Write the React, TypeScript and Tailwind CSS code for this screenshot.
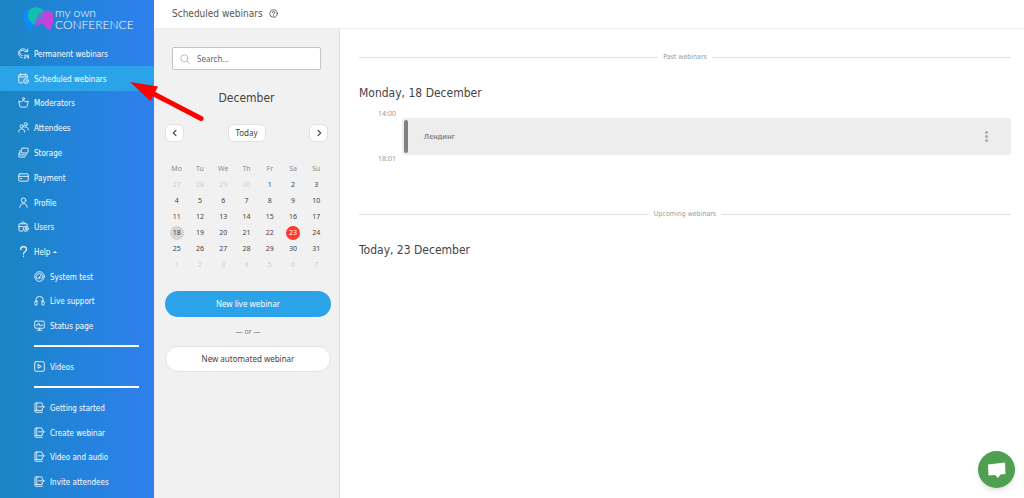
import { useState } from "react";
import type { ReactNode } from "react";
import { clsx } from "clsx";

interface IconProps {
  children: ReactNode;
  className?: string;
}

const Icon = ({ children, className = "w-[11px] h-[11px]" }: IconProps) => (
  <svg
    className={clsx("shrink-0", className)}
    viewBox="0 0 24 24"
    fill="none"
    stroke="currentColor"
    strokeWidth={1.8}
    strokeLinecap="round"
    strokeLinejoin="round"
    aria-hidden="true"
  >
    {children}
  </svg>
);

const PermanentIcon = () => (
  <Icon>
    <path d="M9.500 21.500A10 10 0 1 1 20 7" />
    <path d="M21 2.500V7.500h-5" />
    <path d="M14.500 7A6 6 0 1 0 9 16.500" />
    <path d="M13.500 16c1-1.500 3.500-1 3 1l-3 5h3.500M19.500 15.500v4h3.500M22.500 15.500v7" />
  </Icon>
);

const ScheduledIcon = () => (
  <Icon>
    <path d="M10 21.500H4a2.500 2.500 0 0 1-2.500-2.500V6A2.500 2.500 0 0 1 4 3.500h14A2.500 2.500 0 0 1 20.500 6v4M1.500 8.500h19M6 1.500v4M16 1.500v4" />
    <circle cx="17.500" cy="17.500" r="5.200" />
    <path d="M15.500 17.500l1.500 1.500 2.500-3" />
  </Icon>
);

const ModeratorsIcon = () => (
  <Icon>
    <circle cx="12" cy="3.500" r="2.300" />
    <path d="M12 6.500l4.500 4.500L22.500 9 20 20c-.3 1.300-1 2-2.300 2H6.300C5 22 4.300 21.300 4 20L1.500 9l6 2L12 6.500z" />
  </Icon>
);

const AttendeesIcon = () => (
  <Icon>
    <circle cx="8" cy="9.500" r="3.500" />
    <path d="M1.500 22c0-4.500 2.500-7 6.500-7s6.500 2.500 6.500 7" />
    <circle cx="17" cy="5" r="3.500" />
    <path d="M14.500 11c4.500-1.500 8 1.500 8 6.500" />
  </Icon>
);

const StorageIcon = () => (
  <Icon>
    <path d="M9 2.500h11.500a2 2 0 0 1 2 2.300l-1 6.500a2 2 0 0 1-2 1.700H9a2 2 0 0 1-2-2.300L7.500 4.500A2 2 0 0 1 9 2.500" />
    <path d="M4.500 7.500L3.500 15a2 2 0 0 0 2 2.300h11.500a2 2 0 0 0 2-1.800" />
    <path d="M2.500 13l-1 6.500a2 2 0 0 0 2 2.500H14a2 2 0 0 0 2-2" />
  </Icon>
);

const PaymentIcon = () => (
  <Icon>
    <rect x="1.500" y="4" width="21" height="16" rx="2.500" />
    <path d="M1.500 9.500h21M5 14.500h3" />
  </Icon>
);

const ProfileIcon = () => (
  <Icon>
    <circle cx="12" cy="7" r="5" />
    <path d="M4 22.500c0-5 3-8 8-8s8 3 8 8" />
  </Icon>
);

const UsersIcon = () => (
  <Icon>
    <path d="M10 22H4.500a2.500 2.500 0 0 1-2.500-2.500v-11A2.500 2.500 0 0 1 4.500 6h13A2.500 2.500 0 0 1 20 8.500V11M7 6c0-5.500 8-5.500 8 0M2 12h9" />
    <circle cx="17" cy="17" r="5.500" />
    <path d="M14.500 19.500c.5-2.500 4.500-2.500 5 0" />
    <circle cx="17" cy="15.500" r="1.200" />
  </Icon>
);

const HelpIcon = () => (
  <Icon>
    <path d="M6 7.500C6 4 8.500 1.500 12 1.500S18.500 4 18.500 7.500c0 4.500-6.500 5-6.500 10M12 22v.5" strokeWidth={2.500} />
  </Icon>
);

const SystemTestIcon = () => (
  <Icon>
    <circle cx="12" cy="12" r="10.500" />
    <path d="M7 17.500a7 7 0 1 1 10 0M12 14l3.500-5.500" />
    <circle cx="11.500" cy="15" r="1.500" />
  </Icon>
);

const SupportIcon = () => (
  <Icon>
    <path d="M4 14V11a8 8 0 0 1 16 0v3" />
    <path d="M6.500 13.500H4a3 3 0 0 0-2.500 3V19a3 3 0 0 0 3 3h2v-8.500zM17.500 13.500H20a3 3 0 0 1 2.500 3V19a3 3 0 0 1-3 3h-2v-8.500z" />
  </Icon>
);

const StatusIcon = () => (
  <Icon>
    <rect x="1.500" y="2.500" width="21" height="15.500" rx="2.500" />
    <path d="M12 18v4M7 22.300h10M5 11h3.500l2-4 3 6.500 2-2.500H19" />
  </Icon>
);

const VideoIcon = () => (
  <Icon>
    <rect x="1.500" y="1.500" width="21" height="21" rx="2.500" />
    <path d="M9 8v8l7-4-7-4z" />
  </Icon>
);

const GuideIcon = () => (
  <Icon>
    <path d="M18 6.500V4a2 2 0 0 0-2-2H4a2 2 0 0 0-2 2v14.500M18 14v4.500H4A2 2 0 0 0 4 22.500h14M6 2v16" />
    <path d="M10 10.500h12M19 7.500l3.300 3-3.300 3" />
  </Icon>
);

const mainLinks = [
  { label: "Permanent webinars", icon: <PermanentIcon /> },
  { label: "Scheduled webinars", icon: <ScheduledIcon />, active: true },
  { label: "Moderators", icon: <ModeratorsIcon /> },
  { label: "Attendees", icon: <AttendeesIcon /> },
  { label: "Storage", icon: <StorageIcon /> },
  { label: "Payment", icon: <PaymentIcon /> },
  { label: "Profile", icon: <ProfileIcon /> },
  { label: "Users", icon: <UsersIcon /> },
];

const helpLinks = [
  { label: "System test", icon: <SystemTestIcon /> },
  { label: "Live support", icon: <SupportIcon /> },
  { label: "Status page", icon: <StatusIcon /> },
];

const guideLinks = ["Getting started", "Create webinar", "Video and audio", "Invite attendees"];

const weekdays = ["Mo", "Tu", "We", "Th", "Fr", "Sa", "Su"];

// Six weeks, starting from Monday 27 November
const weeks = Array.from({ length: 6 }, (_, week) =>
  Array.from({ length: 7 }, (_, day) => {
    const n = week * 7 + day - 3;
    if (n < 1) return { day: n + 30, outside: true };
    if (n > 31) return { day: n - 31, outside: true };
    return { day: n, outside: false };
  })
);

const Logo = () => (
  <a href="#" className="flex h-[41px] items-start gap-[2px] pl-6 pt-[7px] text-white">
    <svg className="h-6 w-[29px] shrink-0" viewBox="0 0 29 24" aria-hidden="true">
      <defs>
        <linearGradient id="magenta" x1="0" y1="0" x2="1" y2="1">
          <stop offset="0" stopColor="#9c63e0" />
          <stop offset="0.5" stopColor="#c43fdc" />
          <stop offset="1" stopColor="#c944dd" />
        </linearGradient>
      </defs>
      <path d="M0 8C0 3 4 2 9 5l3 10c-2 2-3 8-6 8C3 22-1 13 0 8z" fill="#0b8bfa" />
      <path d="M4 6C5 1 11-1 16 1c3 1 4 3 4 5-5 2-6 11-10 11-3 0-7-6-6-11z" fill="#12bdb4" />
      <path
        d="M11 18c1-6 4-14 11-14 5-1 7 1 7 5 0 6-1 14-4 14-3 0-3-6-7-6-3 0-6 3-7 1z"
        fill="url(#magenta)"
      />
      <path d="M11 17c0-4 2-8 5-11 2 0 4 0 4 2-1 4-5 7-9 9z" fill="#6b74d4" />
    </svg>
    <span className="flex flex-col font-['Lato',sans-serif] text-[12px] leading-[12px] font-light">
      <span>my own</span>
      <span>CONFERENCE</span>
    </span>
  </a>
);

interface SideLinkProps {
  label: string;
  icon: ReactNode;
  active?: boolean;
  nested?: boolean;
}

const SideLink = ({ label, icon, active, nested }: SideLinkProps) => (
  <li className="grid">
    <a
      href="#"
      aria-current={active ? "page" : undefined}
      className={clsx(
        "flex items-center gap-[5px]",
        nested ? "pl-[34px]" : "pl-[18px]",
        active && "bg-[#2ba3e8]"
      )}
    >
      {icon}
      <span className="pt-[3px]">{label}</span>
    </a>
  </li>
);

const Divider = () => <hr className="my-[7px] ml-[34px] mr-[15px] h-[2px] border-0 bg-white" />;

const Sidebar = () => {
  const [helpOpen, setHelpOpen] = useState(true);

  return (
    <nav className="w-[154px] shrink-0 bg-linear-to-r from-[#1985c1] via-[#2383dc] to-[#2f80ee] font-['DejaVu_Sans_Condensed','DejaVu_Sans',sans-serif] text-[8px] leading-[12px] text-white">
      <Logo />
      <ul className="grid h-[223px] auto-rows-fr">
        {mainLinks.map((link) => (
          <SideLink key={link.label} {...link} />
        ))}
        <li className="grid">
          <button
            type="button"
            aria-expanded={helpOpen}
            className="flex items-center gap-[5px] pl-[18px]"
            onClick={() => setHelpOpen(!helpOpen)}
          >
            <HelpIcon />
            <span className="pt-[3px]">Help</span>
            <svg
              className={clsx("-ml-[2px] h-[2px] w-1", !helpOpen && "rotate-180")}
              viewBox="0 0 4 2"
              fill="currentColor"
              aria-hidden="true"
            >
              <path d="M0 2l2-2 2 2z" />
            </svg>
          </button>
        </li>
      </ul>
      {helpOpen && (
        <>
          <ul className="grid h-[74px] auto-rows-fr">
            {helpLinks.map((link) => (
              <SideLink key={link.label} {...link} nested />
            ))}
          </ul>
          <Divider />
          <ul className="grid h-[25px]">
            <SideLink label="Videos" icon={<VideoIcon />} nested />
          </ul>
          <Divider />
          <ul className="grid h-[99px] auto-rows-fr">
            {guideLinks.map((label) => (
              <SideLink key={label} label={label} icon={<GuideIcon />} nested />
            ))}
          </ul>
        </>
      )}
    </nav>
  );
};

const roundButton =
  "flex h-[18px] items-center justify-center rounded-[6px] border border-[#e2e2e2] bg-white text-[#444]";

const Calendar = () => (
  <div className="w-[163px]">
    <h2 className="mt-[19px] text-center font-['DejaVu_Sans_Condensed','DejaVu_Sans',sans-serif] text-[12px] leading-[18px] text-[#444]">
      December
    </h2>
    <div className="mt-[17px] flex justify-between">
      <button type="button" aria-label="Previous month" className={clsx(roundButton, "w-[19px]")}>
        <Icon className="h-2 w-2">
          <path d="M15 4l-8 8 8 8" strokeWidth={3.500} />
        </Icon>
      </button>
      <button type="button" className={clsx(roundButton, "w-[38px] text-[8px]")}>
        Today
      </button>
      <button type="button" aria-label="Next month" className={clsx(roundButton, "w-[19px]")}>
        <Icon className="h-2 w-2">
          <path d="M9 4l8 8-8 8" strokeWidth={3.500} />
        </Icon>
      </button>
    </div>
    <table className="mt-[19px] w-full table-fixed text-center text-[7px] text-[#444]">
      <thead>
        <tr className="h-4 text-[#8c8c8c]">
          {weekdays.map((day) => (
            <th key={day} scope="col" className="p-0 font-normal leading-4">
              {day}
            </th>
          ))}
        </tr>
      </thead>
      <tbody>
        {weeks.map((week, i) => (
          <tr key={i} className="h-4">
            {week.map(({ day, outside }) => (
              <td key={day} className="p-0">
                <button
                  type="button"
                  className={clsx(
                    "mx-auto flex h-[14px] w-[14px] items-center justify-center rounded-full",
                    outside && "text-[#d0d0d0]",
                    !outside && day === 18 && "bg-[#d5d5d5]",
                    !outside && day === 23 && "bg-[#fb3b30] text-white"
                  )}
                >
                  {day}
                </button>
              </td>
            ))}
          </tr>
        ))}
      </tbody>
    </table>
  </div>
);

const CalendarPanel = () => (
  <aside className="flex w-[186px] shrink-0 flex-col border-r border-[#dcdcdc] bg-[#f1f1f1] pl-[11px] pr-2 pt-[18px]">
    <label className="ml-[7px] flex h-[23px] w-[149px] items-center gap-[7px] rounded-[2px] border border-[#c4c4c4] bg-white pl-[7px]">
      <Icon className="h-[10px] w-[10px] text-[#aaa]">
        <circle cx="10.500" cy="10.500" r="8.500" />
        <path d="M17 17l5.500 5.500" />
      </Icon>
      <input
        type="search"
        aria-label="Search webinars"
        placeholder="Search..."
        className="w-full min-w-0 text-[8px] text-[#444] outline-none placeholder:text-[#666]"
      />
    </label>
    <Calendar />
    <button type="button" className="mt-[18px] h-[26px] rounded-full bg-[#2ba3e8] text-[8px] text-white">
      New live webinar
    </button>
    <p className="my-2 text-center text-[7px] leading-[13px] text-[#777]">— or —</p>
    <button
      type="button"
      className="h-[26px] rounded-full border border-[#e2e2e2] bg-white text-[8px] text-[#444]"
    >
      New automated webinar
    </button>
  </aside>
);

const SectionLine = ({ title }: { title: string }) => (
  <div className="flex h-3 items-center gap-[5px] text-[#999]">
    <span className="h-px flex-1 bg-[#e2e2e2]" />
    <span className="font-['DejaVu_Sans_Condensed','DejaVu_Sans',sans-serif] text-[7px] leading-[12px]">
      {title}
    </span>
    <span className="h-px flex-1 bg-[#e2e2e2]" />
  </div>
);

const DayTitle = ({ children }: { children: ReactNode }) => (
  <h2 className="mt-[21px] font-['DejaVu_Sans_Condensed','DejaVu_Sans',sans-serif] text-[12px] leading-[18px] text-[#444]">
    {children}
  </h2>
);

const WebinarList = () => (
  <section className="min-w-0 flex-1 pl-[19px] pr-[13px] pt-[22px]">
    <SectionLine title="Past webinars" />
    <DayTitle>Monday, 18 December</DayTitle>
    <article className="mt-2 flex">
      <div className="flex w-[43px] flex-col justify-between pl-[19px] text-[7px] leading-[8px] text-[#999]">
        <time>14:00</time>
        <time>18:01</time>
      </div>
      <div className="my-2 flex h-[37px] flex-1 items-center rounded-[3px] bg-[#ededed] p-[2px] pr-5">
        <span className="h-full w-1 rounded-[2px] bg-[#808080]" />
        <h3 className="flex-1 pl-[16px] text-[7px] leading-[12px] font-bold text-[#8c8c8c]">Лендинг</h3>
        <button type="button" aria-label="Webinar actions" className="flex flex-col gap-px p-[3px]">
          <span className="h-[3px] w-[3px] rounded-full bg-[#aaa]" />
          <span className="h-[3px] w-[3px] rounded-full bg-[#aaa]" />
          <span className="h-[3px] w-[3px] rounded-full bg-[#aaa]" />
        </button>
      </div>
    </article>
    <div className="mt-[45px]">
      <SectionLine title="Upcoming webinars" />
    </div>
    <DayTitle>Today, 23 December</DayTitle>
  </section>
);

export default function App() {
  return (
    <div className="relative flex min-h-screen bg-white font-['Noto_Sans',sans-serif]">
      <Sidebar />
      <div className="flex min-w-0 flex-1 flex-col">
        <header className="flex h-[29px] items-center gap-[6px] border-b border-[#ececec] pb-px pl-[18px] text-[#555]">
          <h1 className="font-['DejaVu_Sans_Condensed','DejaVu_Sans',sans-serif] text-[10px]">
            Scheduled webinars
          </h1>
          <button type="button" aria-label="About scheduled webinars">
            <Icon className="h-[9px] w-[9px]">
              <circle cx="12" cy="12" r="10" strokeWidth={2.200} />
              <path d="M8.500 10c0-5 7-4.500 7-.5 0 2.500-3.500 2.500-3.500 5M12 18v.2" strokeWidth={2.400} />
            </Icon>
          </button>
        </header>
        <main className="flex flex-1">
          <CalendarPanel />
          <WebinarList />
        </main>
      </div>
      {/* Pointer to the active menu item */}
      <svg
        className="pointer-events-none absolute left-[130px] top-[80px] h-[42px] w-[74px]"
        viewBox="0 0 74 42"
        aria-hidden="true"
      >
        <path d="M20 12l51 26.500" stroke="#fe0000" strokeWidth="5" strokeLinecap="round" />
        <path d="M0 2L28 6.500 20.500 21z" fill="#fe0000" />
      </svg>
      <button
        type="button"
        aria-label="Open chat"
        className="fixed bottom-[10px] right-[9px] flex h-[37px] w-[37px] items-center justify-center rounded-full bg-[#4f9f50] shadow-md"
      >
        <svg className="h-[18px] w-[18px]" viewBox="0 0 18 18" fill="#fff" aria-hidden="true">
          <path d="M0 3.500L17 1.500l.5 11.500-5 .5-2.500 3.500-3-3-6.500.5z" />
        </svg>
      </button>
    </div>
  );
}
